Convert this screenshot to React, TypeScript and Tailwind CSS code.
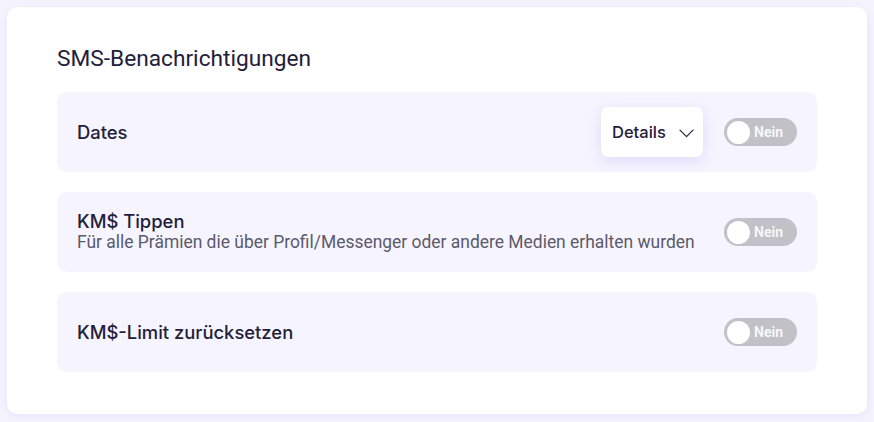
function Chevron() {
  return (
    <svg width="15" height="9" viewBox="0 0 15 9" fill="none" className="mt-[2px]">
      <path d="M1 1.2l6.5 6.5 6.5-6.5" stroke="#23203a" strokeWidth="1.2" strokeLinecap="round" strokeLinejoin="round" />
    </svg>
  );
}

function Toggle() {
  return (
    <div className="relative flex h-[28px] w-[73px] items-center rounded-full bg-[#c2c1c7] px-[3px]">
      <div className="h-[23px] w-[23px] rounded-full bg-white" />
      <span className="ml-[4px] text-[14px] font-bold text-[#f7f7f9]">Nein</span>
    </div>
  );
}

const medium = { fontFamily: "Inter, Roboto, sans-serif" };

function Row({ title, subtitle, details }: { title: string; subtitle?: string; details?: boolean }) {
  return (
    <div className="flex h-[80px] items-center justify-between rounded-[10px] bg-[#f6f4fe] pl-[20px] pr-[20px]">
      <div className="flex flex-col">
        <p className="text-[18.4px] font-medium leading-[21px] text-[#23203a]" style={medium}>
          {title}
        </p>
        {subtitle && <p className="text-[17.45px] leading-[21px] text-[#5b5a6b]">{subtitle}</p>}
      </div>
      <div className="flex items-center gap-[21px]">
        {details && (
          <button className="flex h-[50px] w-[102px] items-center gap-[13px] rounded-[7px] bg-white pl-[11px] shadow-[0_4px_14px_rgba(124,108,240,0.18)]">
            <span className="text-[16.5px] font-medium text-[#23203a]" style={medium}>
              Details
            </span>
            <Chevron />
          </button>
        )}
        <Toggle />
      </div>
    </div>
  );
}

export default function App() {
  return (
    <div className="min-h-[422px] bg-[#f5f4fd] p-[7px]" style={{ fontFamily: "Roboto, 'Noto Sans', sans-serif" }}>
      <div className="h-[407px] w-[860px] rounded-[10px] bg-white px-[50px] pt-[38px] shadow-[0_2px_10px_rgba(124,108,240,0.12)]">
        <h2 className="text-[22.7px] leading-[28px] text-[#23203a]">SMS-Benachrichtigungen</h2>
        <div className="mt-[19px] flex flex-col gap-[20px]">
          <Row title="Dates" details />
          <Row
            title="KM$ Tippen"
            subtitle="Für alle Prämien die über Profil/Messenger oder andere Medien erhalten wurden"
          />
          <Row title="KM$-Limit zurücksetzen" />
        </div>
      </div>
    </div>
  );
}
